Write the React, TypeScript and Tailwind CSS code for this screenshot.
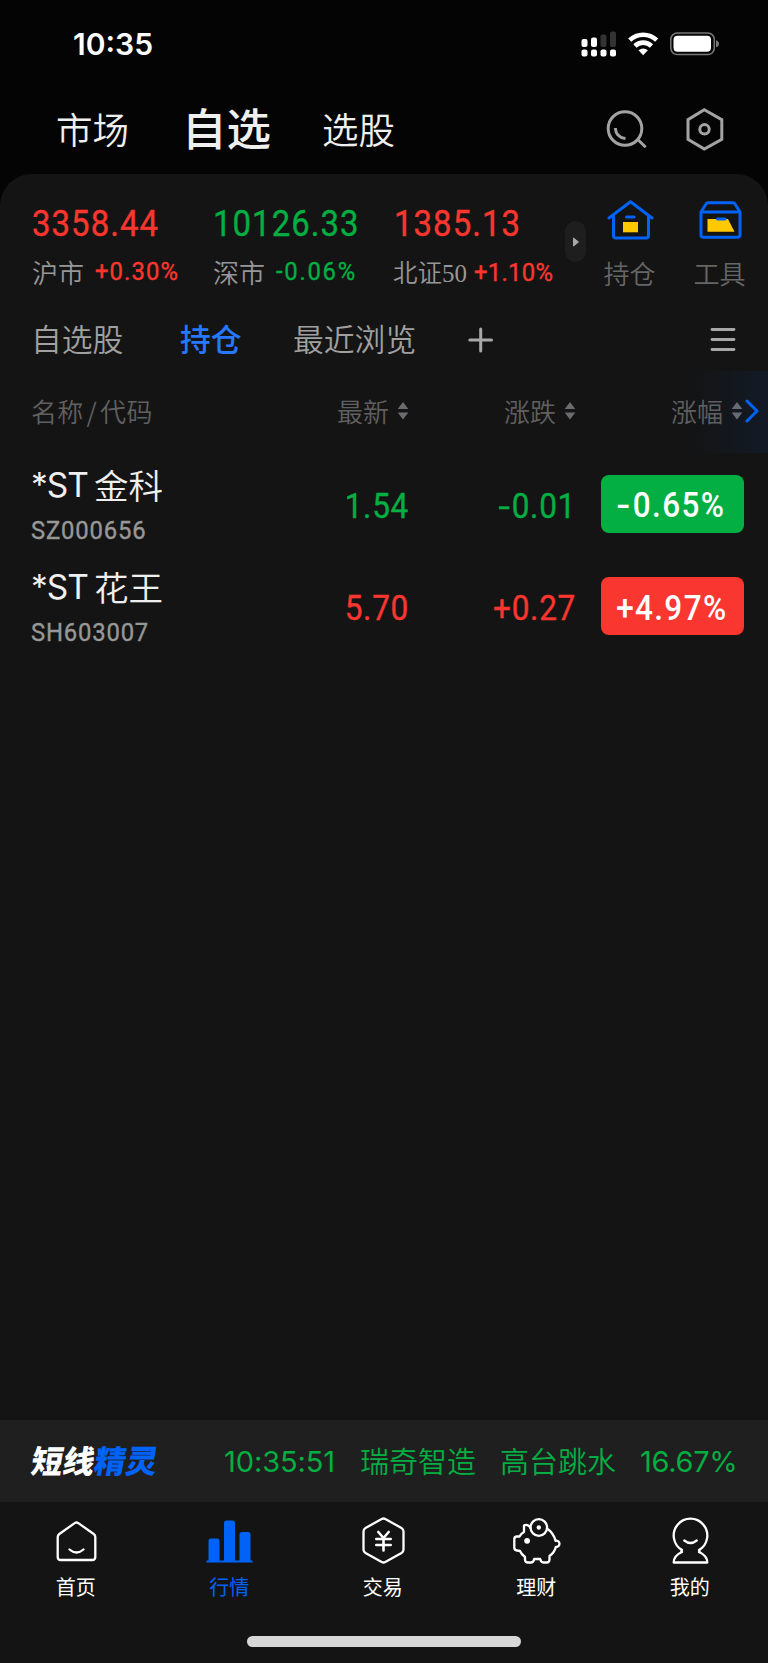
import type { ReactNode } from "react";

const CJK = "font-['Noto_Sans_CJK_SC',sans-serif] leading-none whitespace-nowrap";
const NUM = "font-['Roboto',sans-serif] leading-none whitespace-nowrap scale-x-90";
const NUM_REGULAR = `${NUM} font-normal [-webkit-text-stroke:0.4px_currentColor]`;

function StatusBar() {
  return (
    <div className="flex h-[87px] items-center pl-[73px] text-white">
      <span className="w-[508px] font-['Inter',sans-serif] text-[30px] leading-none font-semibold">10:35</span>
      <svg width="140" height="28" viewBox="0 0 140 28" fill="#fff">
        <g>
          <rect x="0.500" y="9" width="6" height="8" rx="2" />
          <rect x="10" y="7.500" width="6" height="9.500" rx="2" />
          <rect x="19.500" y="4.500" width="6" height="12.500" rx="2" fill="#333" />
          <rect x="29" y="1.500" width="6" height="15.500" rx="2" fill="#333" />
          <rect x="0.500" y="19.500" width="6" height="7" rx="2" />
          <rect x="10" y="19.500" width="6" height="7" rx="2" />
          <rect x="19.500" y="19.500" width="6" height="7" rx="2" />
          <rect x="29" y="19.500" width="6" height="7" rx="2" />
        </g>
        <g fill="none" stroke="#fff" strokeWidth="4.600">
          <path d="M48.700 10.200A19.500 19.500 0 0 1 75.700 10.200" />
          <path d="M53.900 16A12 12 0 0 1 70.500 16" />
        </g>
        <path d="M57.500 20.300Q62.200 16.800 66.900 20.300L62.200 25.300Z" />
        <rect x="89.800" y="3" width="43.500" height="21.600" rx="6.500" fill="none" stroke="#777" strokeWidth="1.500" />
        <rect x="92.500" y="5.700" width="37.500" height="16" rx="4" />
        <path d="M135 10.300Q138 11.300 138 13.800T135 17.300Z" fill="#777" />
      </svg>
    </div>
  );
}

function TopTabs() {
  return (
    <div className="flex h-[87px] items-start text-[#efefef]">
      <div className="flex h-[82px] w-[606px] items-center pl-[56px]">
        <span className={`${CJK} mt-[2px] w-[126px] text-[36.500px] font-[350]`}>市场</span>
        <span className={`${CJK} -mt-px w-[140px] text-[44.500px] font-medium`}>自选</span>
        <span className={`${CJK} mt-[2px] text-[36.500px] font-[350]`}>选股</span>
      </div>
      <svg className="mt-[21px]" width="120" height="44" viewBox="0 0 120 44" fill="none" stroke="#a3a3a3" strokeWidth="3">
        <circle cx="19" cy="20.500" r="16.800" />
        <path d="M9.300 20Q10 29.500 19.500 30.500M32.300 32L39.700 39.300" />
        <path d="M98.300 1.800L115.800 11.700V31.300L98.300 41L82 31.300V11.700Z" />
        <circle cx="98.500" cy="21.300" r="4.700" />
      </svg>
    </div>
  );
}

type IndexProps = { value: string; label: ReactNode; change: string; color: string; labelClass: string; changeClass: string };

function IndexItem({ value, label, change, color, labelClass, changeClass }: IndexProps) {
  return (
    <div className={`w-[181px] ${color}`}>
      <div className={`${NUM_REGULAR} mt-8 origin-left text-[36.500px] tracking-[1.200px]`}>{value}</div>
      <div className="mt-[15px] flex h-[27px] items-center">
        <span className={`${CJK} ${labelClass} shrink-0 text-[#979797]`}>{label}</span>
        <span className={`${NUM_REGULAR} ${changeClass} origin-left text-[26.500px]`}>{change}</span>
      </div>
    </div>
  );
}

function Indices() {
  return (
    <div className="flex h-[126px] pl-8">
      <IndexItem value="3358.44" label="沪市" change="+0.30%" color="text-[#fb362f]" labelClass="mt-px w-[63px] text-[26px] font-[350]" changeClass="mt-px tracking-[1.200px]" />
      <IndexItem value="10126.33" label="深市" change="-0.06%" color="text-[#03ae42]" labelClass="mt-px w-[63px] text-[26px] font-[350]" changeClass="mt-px tracking-[1.900px]" />
      <IndexItem
        value="1385.13"
        label={<>北证<span className="font-['Liberation_Serif',serif] text-[25px]">50</span></>}
        change="+1.10%"
        color="text-[#fb362f]"
        labelClass="mt-[4px] w-[81px] -ml-px text-[24.500px] font-[350]"
        changeClass="mt-[3px] tracking-[0.300px]"
      />
      <div className="mt-[47px] -ml-[10px] flex h-[41px] w-[21px] items-center justify-center rounded-full bg-[#1e1e1e]">
        <svg width="8" height="12" viewBox="0 0 8 12" fill="#a8a8a8"><path d="M1.500 2L6.500 6L1.500 10Z" stroke="#a8a8a8" strokeLinejoin="round" /></svg>
      </div>
      <div className="ml-[17px] flex w-[53px] flex-col items-center pt-[25px]">
        <svg width="48" height="42" viewBox="-0.5 0 48 42" fill="none" stroke="#0063f7" strokeWidth="3" strokeLinecap="round" strokeLinejoin="round">
          <path d="M2.500 19L24 2.800L45.500 19M7 16.500V36.500Q7 39 9.500 39H39.500Q42 39 42 36.500V16.500M20 18H27.500" />
          <path d="M16.500 23H31.500V33.300H16.500Z" fill="#ffc800" stroke="none" />
        </svg>
        <span className={`${CJK} mt-[19px] text-[26px] font-[350] text-[#666]`}>持仓</span>
      </div>
      <div className="ml-[37px] flex w-[53px] flex-col items-center pt-[25px]">
        <svg width="48" height="42" viewBox="-0.5 0 48 42" fill="none" stroke="#0063f7" strokeWidth="3" strokeLinejoin="round" strokeLinecap="round">
          <path d="M4.500 13L9.500 5Q10.200 3.800 11.500 3.800H36.500Q37.800 3.800 38.500 5L43.500 13V36Q43.500 38.300 41 38.300H7Q4.500 38.300 4.500 36ZM5 13H43" />
          <path d="M11 20H31.500L38 32.700H11Z" fill="#ffc800" stroke="none" />
          <path d="M21 20H28.500" />
        </svg>
        <span className={`${CJK} mt-[19px] text-[26px] font-[350] text-[#666]`}>工具</span>
      </div>
    </div>
  );
}

function GroupTabs() {
  return (
    <div className="flex h-[76px] items-center pl-[31px] text-[#a0a0a0]">
      <span className={`${CJK} mt-px w-[149px] text-[30.800px] font-[350]`}>自选股</span>
      <span className={`${CJK} mt-px w-[113px] text-[30.800px] font-medium text-[#2678ff]`}>持仓</span>
      <span className={`${CJK} mt-px w-[175px] text-[30.800px] font-[350]`}>最近浏览</span>
      <svg className="mt-[4px]" width="26" height="26" viewBox="0 0 26 26" stroke="#a8a8a8" strokeWidth="3" strokeLinecap="round"><path d="M1.800 13H23.500M12.700 2V24" /></svg>
      <svg className="mt-px ml-[216px]" width="26" height="26" viewBox="0 0 26 26" stroke="#a8a8a8" strokeWidth="2.800" strokeLinecap="round"><path d="M2 3.500H24M2 13.500H24M2 23.500H24" /></svg>
    </div>
  );
}

function SortHead({ label, className }: { label: string; className: string }) {
  return (
    <div className={`flex shrink-0 items-center justify-end gap-2 ${className}`}>
      <span className={`${CJK} text-[26px] font-[350]`}>{label}</span>
      <svg className="-mt-px" width="12" height="20" viewBox="0 0 12 20" fill="#6b6b70"><path d="M6 1L11.300 8H0.700ZM6 18.500L0.700 11.500H11.300Z" /></svg>
    </div>
  );
}

function TableHead() {
  return (
    <div className="relative mt-[-5px] flex h-[82px] items-center pb-[2px] pl-[31px] text-[#606060]">
      <span className={`${CJK} w-[191px] text-[26px] font-[350] tracking-[0.3px]`}>名称<span className="px-[3px]">/</span>代码</span>
      <SortHead label="最新" className="w-[187px]" />
      <SortHead label="涨跌" className="w-[167px]" />
      <SortHead label="涨幅" className="w-[167px]" />
      <svg className="ml-[2px] shrink-0" width="14" height="24" viewBox="0 0 14 24" fill="none" stroke="#0063f7" strokeWidth="3" strokeLinecap="round" strokeLinejoin="round"><path d="M2 2L12 12L2 22" /></svg>
      <div className="absolute inset-y-0 right-0 w-[76px] bg-linear-to-r from-[#0063f7]/0 to-[#0063f7]/8" />
    </div>
  );
}

function Signed({ value }: { value: string }) {
  if (!value.startsWith("-")) return <>{value}</>;
  return (
    <>
      <span className="mr-[1px] inline-block origin-right scale-x-130">-</span>
      {value.slice(1)}
    </>
  );
}

type RowProps = { name: string; code: string; price: string; diff: string; pct: string; text: string; bg: string };

function StockRow({ name, code, price, diff, pct, text, bg }: RowProps) {
  return (
    <div className="flex h-[102.300px] items-start">
      <div className="w-[220px] pl-[31px] pt-[15px]">
        <div className="flex items-center text-[#efefef]">
          <span className="w-[63px] pt-px font-['Inter',sans-serif] text-[33.500px] leading-none tracking-[-1px]">*ST</span>
          <span className={`${CJK} -mt-[2px] text-[34.500px] font-[350]`}>{name}</span>
        </div>
        <div className={`${NUM_REGULAR} mt-[14px] origin-left text-[26.500px] tracking-[0.900px] text-[#979797]`}>{code}</div>
      </div>
      <div className={`${NUM_REGULAR} ${text} w-[189px] origin-right pt-[36px] text-right text-[35px] tracking-[0.800px]`}>{price}</div>
      <div className={`${NUM_REGULAR} ${text} w-[167px] origin-right pt-[36px] text-right text-[35px] tracking-[0.800px]`}><Signed value={diff} /></div>
      <div className={`${bg} mt-[22px] ml-[25px] flex h-[57.500px] w-[142.500px] items-center justify-center rounded-lg pt-[4px] text-[35px] font-medium tracking-[1.500px] text-white`}>
        <span className={NUM}><Signed value={pct} /></span>
      </div>
    </div>
  );
}

function Ticker() {
  return (
    <div className="flex h-[82px] items-center bg-[#1f1f1f] text-[#03ae42]">
      <div className={`${CJK} -mt-[3px] ml-[32px] flex w-[192px] text-[31.500px] font-black`}>
        <span className="inline-block -skew-x-10 text-white">短线</span>
        <span className="inline-block -skew-x-10 text-[#0063f7]">精灵</span>
      </div>
      <span className="w-[136px] font-['Inter',sans-serif] text-[29px] leading-none tracking-[-0.100px]">10:35:51</span>
      <span className={`${CJK} -mt-[2px] w-[140px] text-[29px] font-[350]`}>瑞奇智造</span>
      <span className={`${CJK} -mt-[2px] w-[140px] text-[29px] font-[350]`}>高台跳水</span>
      <span className="font-['Inter',sans-serif] text-[29px] leading-none tracking-[-0.300px]">16.67%</span>
    </div>
  );
}

function NavItem({ label, active, children }: { label: string; active?: boolean; children: ReactNode }) {
  return (
    <div className={`flex w-[153.500px] shrink-0 flex-col items-center ${active ? "text-[#0063f7]" : "text-white"}`}>
      <svg className="mt-3" width="50" height="52" viewBox="-0.5 0 50 52" fill="none" stroke="currentColor" strokeWidth="2.300" strokeLinecap="round" strokeLinejoin="round">{children}</svg>
      <span className={`${CJK} mt-[11px] text-[20px]`}>{label}</span>
    </div>
  );
}

function BottomNav() {
  return (
    <div className="-ml-px flex h-[134px]">
      <NavItem label="首页">
        <path d="M23.200 9.100Q25 7.900 26.800 9.100L42.200 20Q43.800 21.200 43.800 23V43Q43.800 46 40.800 46H9.200Q6.200 46 6.200 43V23Q6.200 21.200 7.800 20Z" />
        <path d="M18 35.500Q25 41.500 32 35.500" />
      </NavItem>
      <NavItem label="行情" active>
        <path d="M2 46.500H48V48.500H2ZM4 27Q4 24.500 6.500 24.500H12.500Q15 24.500 15 27V47H4ZM19.500 9Q19.500 6.500 22 6.500H28Q30.500 6.500 30.500 9V47H19.500ZM35 20.500Q35 18 37.500 18H43.500Q46 18 46 20.500V47H35Z" fill="currentColor" stroke="none" />
      </NavItem>
      <NavItem label="交易">
        <path d="M23.200 5Q25 4 26.800 5L43 14Q45 15.200 45 17.500V35.500Q45 37.800 43 39L26.800 48Q25 49 23.200 48L7 39Q5 37.800 5 35.500V17.500Q5 15.200 7 14Z" />
        <path d="M19.800 18L25 24L30.200 18M17.800 25H32.200M17.800 31H32.200M25 24V36.500" strokeWidth="2.600" />
      </NavItem>
      <NavItem label="理财">
        <circle cx="27.300" cy="13.500" r="8.300" />
        <circle cx="27.300" cy="13.500" r="2.200" fill="currentColor" stroke="none" />
        <circle cx="15.600" cy="26.800" r="2.900" fill="currentColor" stroke="none" />
        <path d="M19 14C17.500 11 14.500 10 12.500 11.500V18C10.500 19 9 20.500 8 22.500H5.500Q2.800 22.500 2.800 25.200V33.500Q2.800 36.200 5.500 36.500L8.500 37C9.500 39.500 11.500 41.500 13.500 43V45.500Q13.500 48.500 16.500 48.500H19.500Q22 48.500 22.700 45H28.700Q29.500 48.500 32 48.500H35Q38 48.500 38 45.500V42C41 40 43.500 36.500 44.300 33C46.300 33.200 48 31.800 48 29.800S46.300 26.300 44 26.800C42.700 21.500 40 17.500 35.500 14.500" />
      </NavItem>
      <NavItem label="我的">
        <path d="M16.500 36A16.800 16.800 0 1 1 33.500 36Q35 37 33.500 38C38 40 41.800 43 41.800 48.500H8.200C8.200 43 12 40 16.500 38Q15 37 16.500 36ZM18.800 26.500Q25 31.500 31.200 26.500" />
      </NavItem>
    </div>
  );
}

export default function App() {
  return (
    <div className="flex h-[1663px] w-[768px] flex-col overflow-hidden bg-[#040404]">
      <StatusBar />
      <TopTabs />
      <main className="flex flex-1 flex-col rounded-t-[32px] bg-[#141414]">
        <Indices />
        <GroupTabs />
        <TableHead />
        <StockRow name="金科" code="SZ000656" price="1.54" diff="-0.01" pct="-0.65%" text="text-[#03ae42]" bg="bg-[#03ae42]" />
        <StockRow name="花王" code="SH603007" price="5.70" diff="+0.27" pct="+4.97%" text="text-[#f9362f]" bg="bg-[#f9362f]" />
        <div className="flex-1" />
        <Ticker />
        <BottomNav />
        <div className="flex h-[27px] justify-center">
          <div className="h-[11px] w-[274px] rounded-full bg-[#d7d7d7]" />
        </div>
      </main>
    </div>
  );
}
